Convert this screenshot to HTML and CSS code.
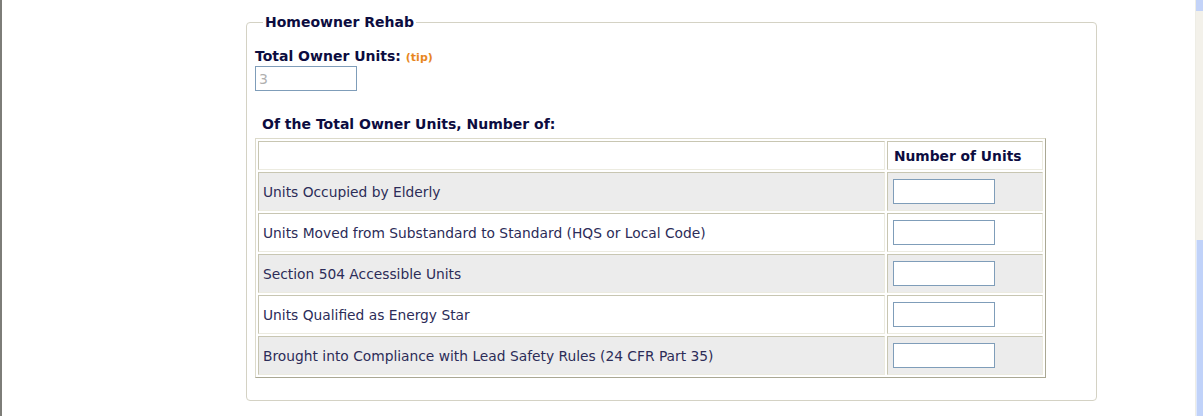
FILE: index.html
```html
<!DOCTYPE html>
<html lang="en">
<head>
    <meta charset="UTF-8">
    <title>Homeowner Rehab</title>
    <link rel="stylesheet" href="styles.css">
</head>
<body>
    <div class="page">
        <fieldset class="rehab">
            <legend>Homeowner Rehab</legend>

            <label class="field-label" for="totalUnits">Total Owner Units: <span class="tip">(tip)</span></label>
            <input type="text" id="totalUnits" class="unit-input" value="3" disabled>

            <h4 class="table-title">Of the Total Owner Units, Number of:</h4>
            <table class="units-table">
                <tr class="head">
                    <td class="label-col"></td>
                    <th class="num-col">Number of Units</th>
                </tr>
                <tr class="alt">
                    <td>Units Occupied by Elderly</td>
                    <td><input type="text" class="unit-input"></td>
                </tr>
                <tr>
                    <td>Units Moved from Substandard to Standard (HQS or Local Code)</td>
                    <td><input type="text" class="unit-input"></td>
                </tr>
                <tr class="alt">
                    <td>Section 504 Accessible Units</td>
                    <td><input type="text" class="unit-input"></td>
                </tr>
                <tr>
                    <td>Units Qualified as Energy Star</td>
                    <td><input type="text" class="unit-input"></td>
                </tr>
                <tr class="alt">
                    <td>Brought into Compliance with Lead Safety Rules (24 CFR Part 35)</td>
                    <td><input type="text" class="unit-input"></td>
                </tr>
            </table>
        </fieldset>
    </div>

    <div class="scrollbar">
        <div class="scroll-btn"></div>
        <div class="scroll-track"></div>
        <div class="scroll-thumb"></div>
    </div>
</body>
</html>
```

FILE: styles.css
```css
body {
    margin: 0;
    padding: 0;
    height: 416px;
    overflow: hidden;
    display: flex;
    background-color: #ffffff;
    font-family: "DejaVu Sans", Verdana, sans-serif;
    font-size: 13.8px;
    color: #2c2c58;
    border-left: 2px solid #7d7d78;
}

.page {
    flex: 1;
    padding-left: 244px;
    padding-top: 14px;
}

.rehab {
    width: 851px;
    height: 387px;
    box-sizing: border-box;
    margin: 0;
    padding: 4px 8px 0 8px;
    border: 1px solid #d4d2c4;
    border-radius: 4px;
}

.rehab legend {
    margin-left: 8px;
    padding: 0 2px;
    font-weight: bold;
    font-size: 14px;
    color: #0c0c40;
}

.field-label {
    display: block;
    font-weight: bold;
    font-size: 14px;
    color: #0c0c40;
    margin-top: 14px;
}

.tip {
    color: #e8871e;
    font-size: 11px;
}

.unit-input {
    display: block;
    box-sizing: border-box;
    width: 102px;
    height: 25px;
    margin: 2px 0 0 0;
    padding: 1px 3px;
    border: 1px solid #7f9db9;
    background: #ffffff;
    font-family: "DejaVu Sans", Verdana, sans-serif;
    font-size: 14px;
    color: #b0b0b0;
}

.table-title {
    margin: 25px 0 6px 7px;
    font-size: 14px;
    color: #0c0c40;
}

.units-table {
    width: 791px;
    border-collapse: separate;
    border-spacing: 2px;
    border: 1px solid;
    border-color: #dcdaca #aaa894 #aaa894 #dcdaca;
}

.units-table td,
.units-table th {
    border: 1px solid;
    border-color: #c8c6b2 #ecebe0 #ecebe0 #c8c6b2;
    padding: 0 6px 0 4px;
    height: 37px;
    text-align: left;
}

.units-table tr.head td,
.units-table tr.head th {
    height: 27px;
}

.units-table th {
    padding-left: 6px;
    font-weight: bold;
    font-size: 13.8px;
    color: #0c0c40;
}

.units-table .num-col {
    width: 142px;
}

.units-table tr.alt td {
    background-color: #ececec;
}

.units-table td .unit-input {
    margin: 0 0 0 1px;
}

.scrollbar {
    width: 7px;
    display: flex;
    flex-direction: column;
    border-left: 1px solid #eeede5;
}

.scroll-btn {
    height: 11px;
    background-color: #c3d3f8;
}

.scroll-track {
    height: 229px;
    background-color: #f3f1ea;
}

.scroll-thumb {
    flex: 1;
    background-color: #c0d2f9;
    border-left: 1px solid #dfe8fc;
}
```
